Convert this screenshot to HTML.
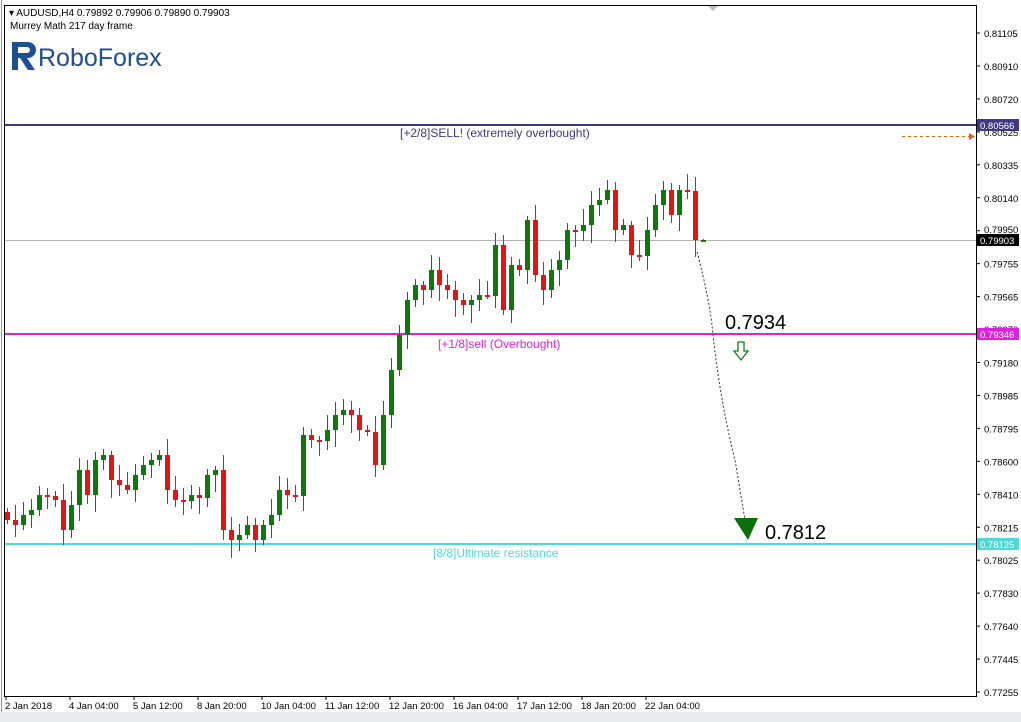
<!DOCTYPE html><html><head><meta charset="utf-8"><style>
html,body{margin:0;padding:0;background:#fff;width:1021px;height:722px;overflow:hidden;font-family:"Liberation Sans",sans-serif}
</style></head><body>
<svg id="s" width="1021" height="722" xmlns="http://www.w3.org/2000/svg" style="position:absolute;left:0;top:0">
<rect x="0" y="0" width="1021" height="722" fill="#fff"/>
<rect x="0" y="712" width="1021" height="10" fill="#e8ecef"/>
<line x1="1.5" y1="0" x2="1.5" y2="712" stroke="#999"/>
<line x1="4.5" y1="5" x2="4.5" y2="696" stroke="#000"/>
<line x1="4" y1="5.5" x2="977" y2="5.5" stroke="#000"/>
<line x1="976.5" y1="5" x2="976.5" y2="697" stroke="#000"/>
<line x1="4" y1="696.5" x2="977" y2="696.5" stroke="#000"/>
<polygon points="708,6 718,6 713,11" fill="#bbb"/>
<line x1="5" y1="240.5" x2="976" y2="240.5" stroke="#b4b4b4"/>
<line x1="5" y1="125" x2="976" y2="125" stroke="#3f3a80" stroke-width="2"/>
<line x1="5" y1="334" x2="976" y2="334" stroke="#e020e0" stroke-width="2"/>
<line x1="5" y1="544" x2="976" y2="544" stroke="#4fd8d8" stroke-width="2"/>
<text x="400" y="137" font-size="12" fill="#3f3a80">[+2/8]SELL! (extremely overbought)</text>
<text x="438" y="348" font-size="12" fill="#e020e0">[+1/8]sell (Overbought)</text>
<text x="433" y="557" font-size="12" fill="#4fd8d8">[8/8]Ultimate resistance</text>
<line x1="902" y1="136.5" x2="970" y2="136.5" stroke="#e06020" stroke-dasharray="3,3"/>
<polygon points="969,133 975,136.5 969,140" fill="#e06020"/>
<g id="c"></g>
<path d="M697,252 Q710,300 713,335 Q720,400 735,460 L745,520" fill="none" stroke="#333" stroke-dasharray="2,2"/>
<polygon points="734,518 758,518 748,540" fill="#0b6e0b"/>
<path d="M738,342 h6 v9 h4 l-7,9 l-7,-9 h4 z" fill="#fff" stroke="#1a7a1a" stroke-width="1.3"/>
<text x="725" y="329" font-size="20" fill="#000">0.7934</text>
<text x="765" y="539" font-size="20" fill="#000">0.7812</text>
<text x="9" y="16" font-size="10" fill="#000">▾ AUDUSD,H4  0.79892 0.79906 0.79890 0.79903</text>
<text x="10" y="29" font-size="10" fill="#000">Murrey Math 217 day frame</text>
<path d="M12,42 h16 a8,8 0 0 1 0,16 h-1 l8,12 h-7 l-8,-12 h-2 v12 h-6 z M18,47 v6 h9 a3,3 0 0 0 0,-6 z" fill="#1d4f91" fill-rule="evenodd"/>
<path d="M12,70 v-6 h6 v6 z" fill="#1d4f91"/>
<text x="38" y="66" font-size="25" fill="#1d4f91">RoboForex</text>
<g id="ax" font-size="9.5" fill="#000"></g>
<rect x="977" y="119" width="42" height="12" fill="#3f3a80"/><text x="980" y="129" font-size="9.5" fill="#fff">0.80566</text>
<rect x="977" y="234" width="42" height="12" fill="#000"/><text x="980" y="244" font-size="9.5" fill="#fff">0.79903</text>
<rect x="977" y="328" width="42" height="12" fill="#e020e0"/><text x="980" y="338" font-size="9.5" fill="#fff">0.79346</text>
<rect x="977" y="538" width="42" height="12" fill="#4fd8d8"/><text x="980" y="548" font-size="9.5" fill="#fff">0.78125</text>
</svg>
<script>
var NS="http://www.w3.org/2000/svg",s=document.getElementById('ax'),g=document.getElementById('c');
function el(p,t,a,txt){var e=document.createElementNS(NS,t);for(var k in a)e.setAttribute(k,a[k]);if(txt)e.textContent=txt;p.appendChild(e);return e;}
var pr=["0.81105","0.80910","0.80720","0.80525","0.80335","0.80140","0.79950","0.79755","0.79565","0.79370","0.79180","0.78985","0.78795","0.78600","0.78410","0.78215","0.78025","0.77830","0.77640","0.77445","0.77255"];
for(var i=0;i<pr.length;i++){var y=33+i*32.95;el(s,'line',{x1:976,x2:980,y1:y,y2:y,stroke:'#000'});if(i!=3&&i!=6&&i!=9)el(s,'text',{x:984,y:y+4},pr[i]);}
el(s,'text',{x:984,y:136},"0.80525");el(s,'text',{x:984,y:233},"0.79950");el(s,'text',{x:984,y:333},"0.79370");
var d=["2 Jan 2018","4 Jan 04:00","5 Jan 12:00","8 Jan 20:00","10 Jan 04:00","11 Jan 12:00","12 Jan 20:00","16 Jan 04:00","17 Jan 12:00","18 Jan 20:00","22 Jan 04:00"];
for(var i=0;i<d.length;i++){var x=6+i*64;el(s,'line',{x1:x,x2:x,y1:696,y2:700,stroke:'#000'});el(s,'text',{x:x-1,y:709},d[i]);}
var cl=[520,525,515,510,495,495,500,530,505,470,495,460,455,480,485,490,475,465,460,455,490,500,500,495,498,475,470,530,540,535,525,540,525,515,490,495,495,435,440,440,430,415,410,415,430,432,465,415,370,335,300,285,290,270,285,290,300,305,300,295,295,245,310,265,270,220,275,290,270,260,230,230,225,205,200,190,230,225,255,255,230,205,190,215,190,190,240,240];
var prev=512;
for(var i=0;i<cl.length;i++){var x=7+i*8,o=prev,c=cl[i];if(i==cl.length-1){o=241;c=240;}
var h=Math.min(o,c)-(4+((i*37)%13)),l=Math.max(o,c)+(4+((i*53)%15));
if(i==cl.length-1){h=239;l=242;}
var col=c<o?'#0e780e':'#e01515';if(c==o)c=o+1;
el(g,'line',{x1:x+0.5,x2:x+0.5,y1:h,y2:l,stroke:col});
el(g,'rect',{x:x-2,y:Math.min(o,c),width:5,height:Math.max(2,Math.abs(c-o)),fill:col});prev=c;}
</script>
</body></html>
